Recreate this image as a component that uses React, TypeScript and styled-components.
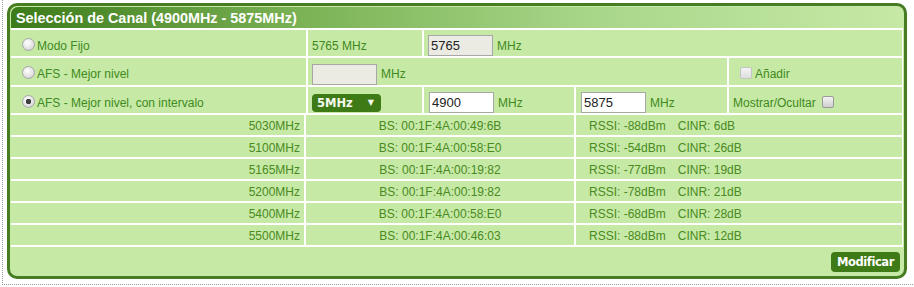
import React from "react";
import styled, { createGlobalStyle } from "styled-components";

const Global = createGlobalStyle`
  html, body { margin: 0; padding: 0; background: #ffffff; }
  body { font-family: "Liberation Sans", Arial, sans-serif; }
`;

const Page = styled.div`
  width: 906px;
  margin-left: 2px;
  padding: 3px 0 5px 4px;
  border-left: 1px dotted #9a9a9a;
  border-bottom: 1px dotted #9a9a9a;
`;

const Panel = styled.div`
  width: 892px;
  border: 3px solid #467c22;
  border-radius: 10px;
  background: #c6e9a6;
  padding: 1px 1px 0 1px;
  overflow: hidden;
`;

const Header = styled.div`
  height: 21px;
  display: flex;
  align-items: center;
  padding-left: 5px;
  border-radius: 7px 7px 0 0;
  background: linear-gradient(to right, #3c7b1a 0%, #7cb356 33%, #a9d78a 66%, #c6e9a6 100%);
  color: #ffffff;
  font: bold 14.4px "Liberation Sans", Arial, sans-serif;
`;

const Section = styled.div<{ $cols: string; $top?: number }>`
  display: grid;
  grid-template-columns: ${(p) => p.$cols};
  gap: 2px;
  background: #ffffff;
  padding: ${(p) => p.$top ?? 2}px 1px 2px 0;
`;

const Cell = styled.div<{ $span?: number; $align?: string; $h?: number; $drop?: number }>`
  grid-column: span ${(p) => p.$span ?? 1};
  background: #c6e9a6;
  height: ${(p) => (p.$h ?? 20) - (p.$drop ?? 5)}px;
  display: flex;
  align-items: center;
  justify-content: ${(p) => p.$align ?? "flex-start"};
  padding: ${(p) => p.$drop ?? 5}px 4px 0;
  color: #3f8a20;
  font-size: 12px;
  white-space: nowrap;
`;

const DataCell = styled(Cell)`
  color: #4a8a22;
`;

const Metric = styled.span<{ $pad: number }>`
  padding-left: ${(p) => p.$pad}px;
`;

const Radio = styled.input.attrs({ type: "radio" })`
  appearance: none;
  width: 13px;
  height: 13px;
  margin: 0 2px 3px 7px;
  border-radius: 50%;
  border: 1px solid #a8a8a8;
  background: radial-gradient(circle at 40% 35%, #ffffff 0%, #e4e4e4 55%, #c8c8c8 100%);
  &:checked {
    background: radial-gradient(circle at 50% 50%, #404040 0 2.5px, transparent 3px),
      radial-gradient(circle at 40% 35%, #ffffff 0%, #e4e4e4 55%, #c8c8c8 100%);
  }
`;

const Check = styled.input.attrs({ type: "checkbox" })<{ $dim?: boolean }>`
  appearance: none;
  width: 12px;
  height: 12px;
  margin: 0 ${(p) => (p.$dim ? "3px" : "0")} 2px ${(p) => (p.$dim ? "7px" : "6px")};
  border-radius: 2px;
  border: 1px solid ${(p) => (p.$dim ? "#c4c4c4" : "#9a9a9a")};
  background: linear-gradient(#f4f4f4, ${(p) => (p.$dim ? "#dedede" : "#cfcfcf")});
`;

const TextBox = styled.input<{ $off?: boolean }>`
  box-sizing: border-box;
  width: 65px;
  height: 21px;
  margin: 0 4px 0 ${(p) => (p.$off ? "0" : "1px")};
  padding: 0 2px;
  border: 1px solid #a7a7a7;
  background: ${(p) => (p.$off ? "#ebebe4" : "#ffffff")};
  color: #222;
  font: 13px "Liberation Sans", Arial, sans-serif;
  outline: none;
`;

const Unit = styled.span`
  color: #3f8a20;
  font-size: 12px;
`;

const Select = styled.div`
  box-sizing: border-box;
  width: 69px;
  height: 18px;
  border-radius: 4px;
  background: #3e7a16;
  color: #f4f8ee;
  font: bold 11.5px "DejaVu Sans", Verdana, sans-serif;
  display: flex;
  align-items: center;
  justify-content: space-between;
  padding: 0 7px 0 5px;
`;

const Arrow = styled.span`
  font-size: 8px;
`;

const Footer = styled.div`
  display: flex;
  justify-content: flex-end;
  align-items: flex-start;
  padding: 5px 3px 0 0;
  height: 24px;
`;

const Button = styled.button`
  height: 20px;
  padding: 0 6px;
  border: none;
  border-radius: 4px;
  background: #3e7a16;
  color: #ffffff;
  font: bold 11.5px "DejaVu Sans", Verdana, sans-serif;
  letter-spacing: -0.4px;
`;

const scans = [
  ["5030MHz", "BS: 00:1F:4A:00:49:6B", "-88dBm", "6dB"],
  ["5100MHz", "BS: 00:1F:4A:00:58:E0", "-54dBm", "26dB"],
  ["5165MHz", "BS: 00:1F:4A:00:19:82", "-77dBm", "19dB"],
  ["5200MHz", "BS: 00:1F:4A:00:19:82", "-78dBm", "21dB"],
  ["5400MHz", "BS: 00:1F:4A:00:58:E0", "-68dBm", "28dB"],
  ["5500MHz", "BS: 00:1F:4A:00:46:03", "-88dBm", "12dB"],
];

export default function App() {
  return (
    <>
      <Global />
      <Page>
        <Panel>
          <Header>Selección de Canal (4900MHz - 5875MHz)</Header>
          <Section $cols="295px 114px 150px 151px 1fr">
            <Cell $h={26}>
              <Radio name="modo" />
              Modo Fijo
            </Cell>
            <Cell $h={26}>5765 MHz</Cell>
            <Cell $h={26} $span={3}>
              <TextBox $off disabled defaultValue="5765" />
              <Unit>MHz</Unit>
            </Cell>
            <Cell $h={27}>
              <Radio name="modo" />
              AFS - Mejor nivel
            </Cell>
            <Cell $h={27} $span={3}>
              <TextBox $off disabled defaultValue="" />
              <Unit>MHz</Unit>
            </Cell>
            <Cell $h={27}>
              <Check $dim disabled />
              <Unit>Añadir</Unit>
            </Cell>
            <Cell $h={26}>
              <Radio name="modo" defaultChecked />
              AFS - Mejor nivel, con intervalo
            </Cell>
            <Cell $h={26}>
              <Select>
                5MHz<Arrow>▼</Arrow>
              </Select>
            </Cell>
            <Cell $h={26}>
              <TextBox defaultValue="4900" />
              <Unit>MHz</Unit>
            </Cell>
            <Cell $h={26}>
              <TextBox defaultValue="5875" />
              <Unit>MHz</Unit>
            </Cell>
            <Cell $h={26}>
              Mostrar/Ocultar
              <Check />
            </Cell>
          </Section>
          <Section $cols="293px 268px 1fr" $top={0}>
            {scans.map(([f, bs, rssi, cinr]) => (
              <React.Fragment key={f + bs}>
                <DataCell $drop={2} $align="flex-end">{f}</DataCell>
                <DataCell $drop={2} $align="center">{bs}</DataCell>
                <DataCell $drop={2}>
                  <Metric $pad={9}>RSSI: {rssi}</Metric>
                  <Metric $pad={12}>CINR: {cinr}</Metric>
                </DataCell>
              </React.Fragment>
            ))}
          </Section>
          <Footer>
            <Button>Modificar</Button>
          </Footer>
        </Panel>
      </Page>
    </>
  );
}
